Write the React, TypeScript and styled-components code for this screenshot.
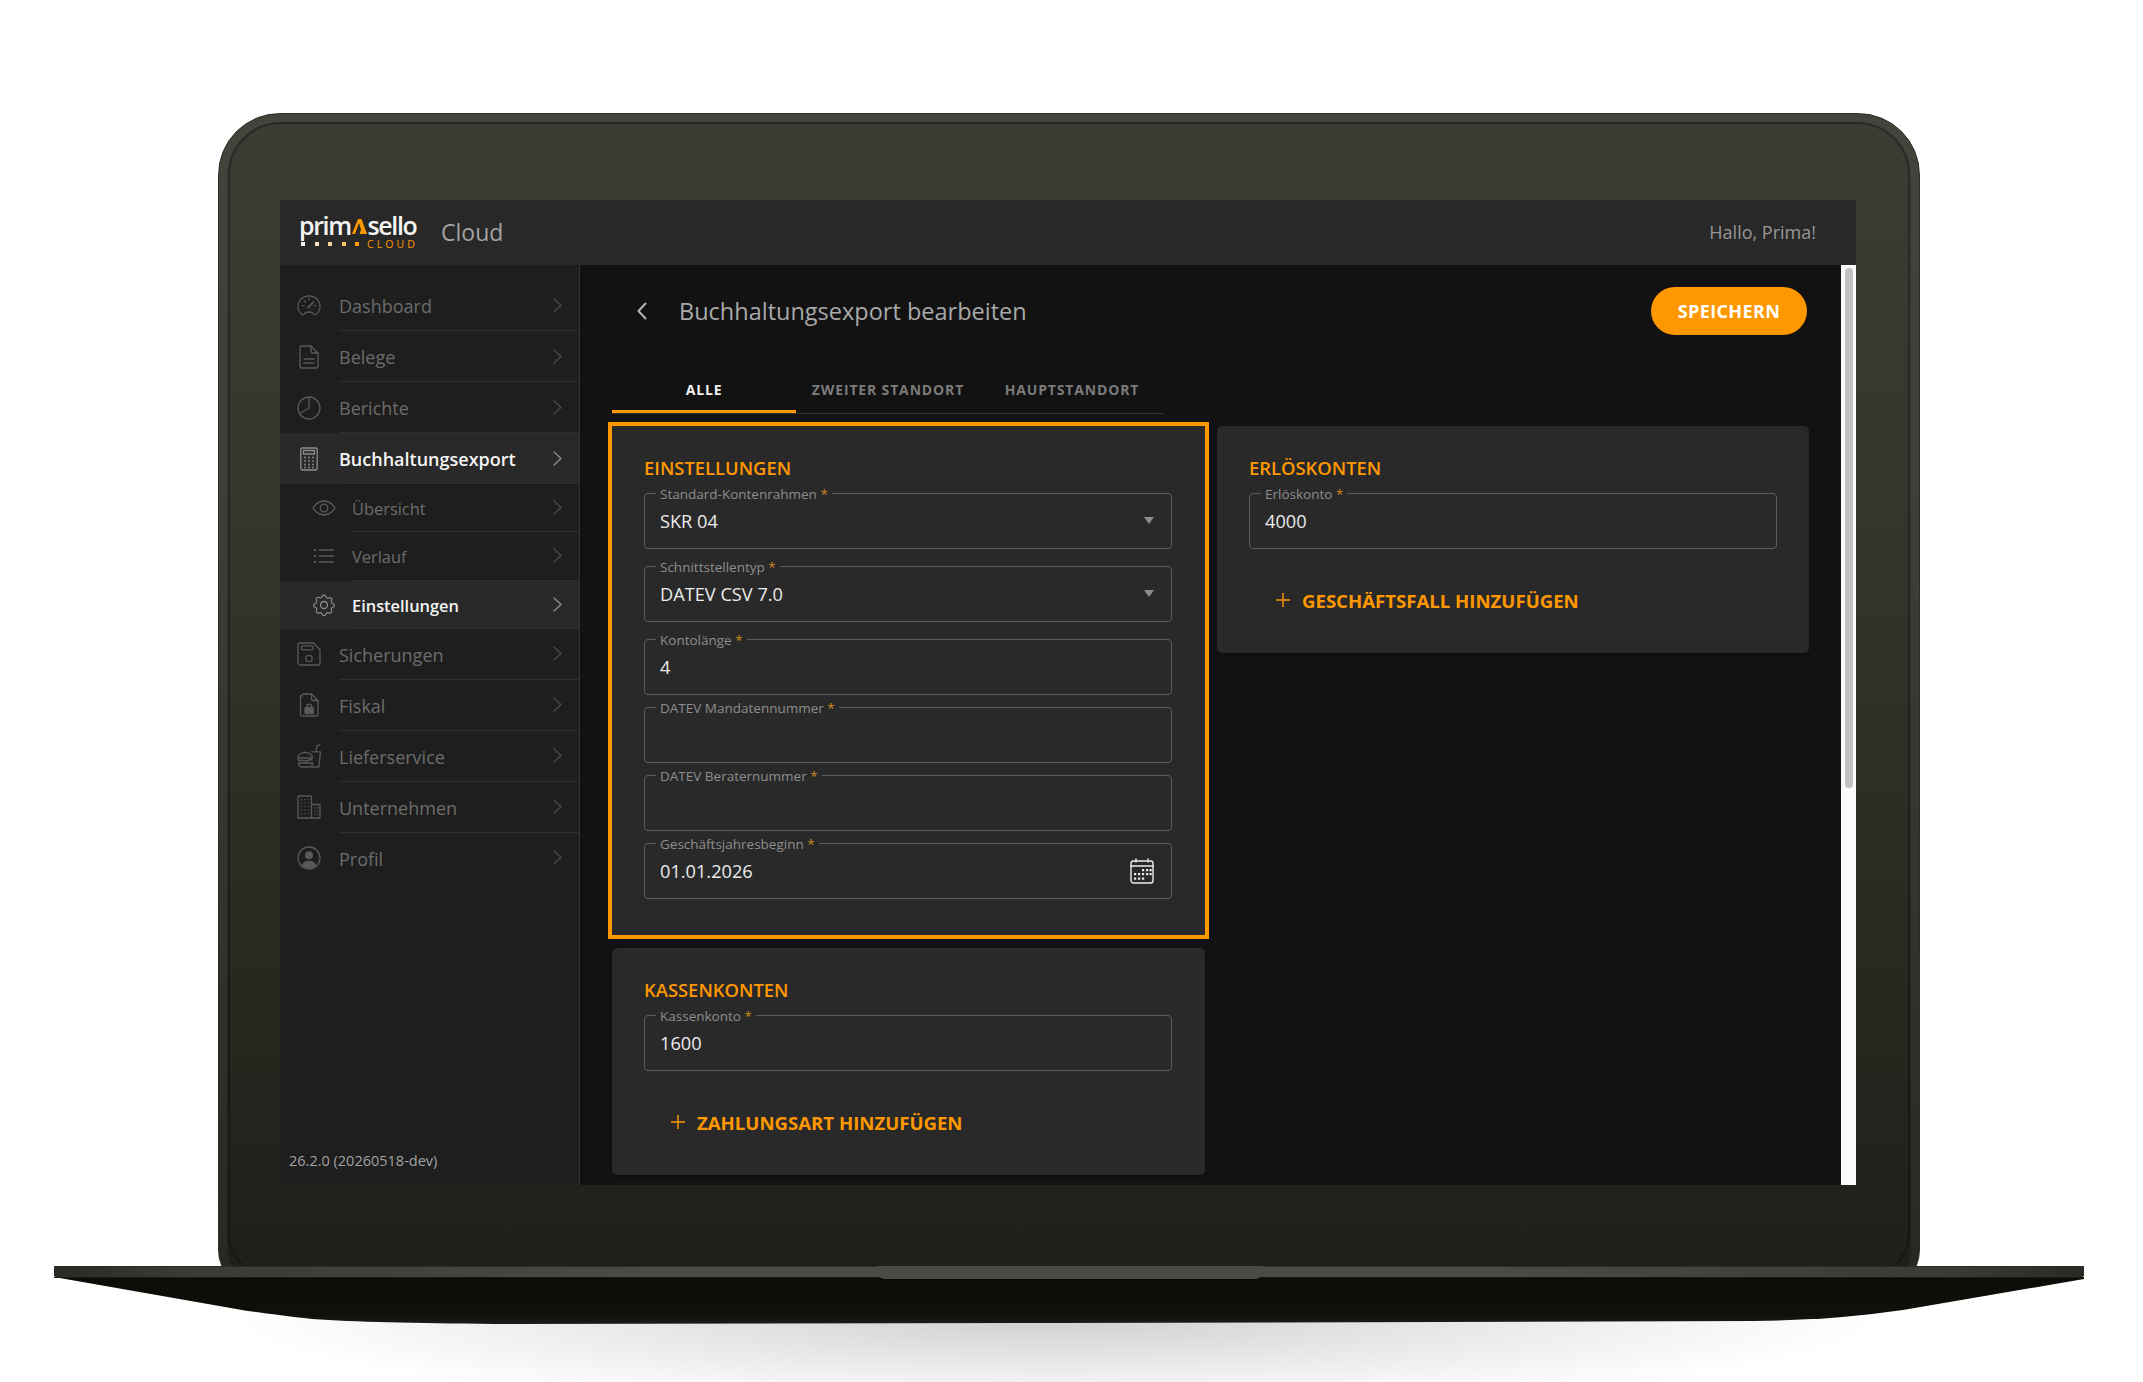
import React from "react";
import styled, { createGlobalStyle } from "styled-components";

const ORANGE = "#ff9800";

const GlobalStyle = createGlobalStyle`
  html, body {
    margin: 0;
    padding: 0;
    background: #fff;
  }
  * {
    box-sizing: border-box;
  }
  body {
    font-family: "Open Sans", "Noto Sans", "Liberation Sans", sans-serif;
  }
`;

const Stage = styled.div`
  position: relative;
  width: 2143px;
  height: 1382px;
  overflow: hidden;
  padding-top: 113px;
  background: #fff;
`;

const Lid = styled.div`
  position: relative;
  width: 1702px;
  height: 1177px;
  margin-left: 218px;
  padding: 86px 63px 0 61px;
  border: 1px solid #2d2c26;
  border-radius: 62px 62px 40px 40px;
  background: linear-gradient(180deg, #3d3c34 0%, #36352d 35%, #26251e 80%, #1f1e18 100%);
  box-shadow: inset 0 0 0 8px rgba(255, 255, 255, 0.045);

  &::before {
    content: "";
    position: absolute;
    top: 8px;
    left: 9px;
    right: 9px;
    bottom: 11px;
    border: 2px solid rgba(0, 0, 0, 0.3);
    border-radius: 53px 53px 44px 44px;
  }
`;

const BaseWrap = styled.div`
  position: relative;
  width: 2030px;
  height: 60px;
  margin: -24px 0 0 54px;

  svg {
    display: block;
  }
`;

const GroundShadow = styled.div`
  position: absolute;
  left: 230px;
  top: 1300px;
  width: 1650px;
  height: 90px;
  background: radial-gradient(
    ellipse 50% 100% at 50% 20%,
    rgba(0, 0, 0, 0.19) 0%,
    rgba(0, 0, 0, 0.09) 50%,
    rgba(0, 0, 0, 0) 100%
  );
`;

const Screen = styled.div`
  position: relative;
  z-index: 1;
  display: flex;
  flex-direction: column;
  width: 1576px;
  height: 985px;
  overflow: hidden;
  background: #121212;
`;

const TopBar = styled.header`
  display: flex;
  align-items: center;
  justify-content: space-between;
  flex: 0 0 65px;
  padding: 0 40px 2px 19px;
  background: #282828;
`;

const Brand = styled.div`
  display: flex;
  align-items: center;
  gap: 26px;
`;

const Logo = styled.div`
  display: flex;
  flex-direction: column;
  width: 116px;
  margin-top: -2px;
`;

const LogoWord = styled.div`
  display: flex;
  align-items: flex-end;
  height: 25px;
  font-size: 25px;
  line-height: 25px;
  font-weight: 600;
  letter-spacing: -1.4px;
  color: #f4f4f4;
`;

const LogoSub = styled.div`
  display: flex;
  align-items: center;
  justify-content: space-between;
  height: 10px;
  margin-top: 1px;
  padding-left: 2px;
`;

const LogoDots = styled.div`
  display: flex;
  gap: 9.5px;
`;

const LogoDot = styled.span<{ $color: string }>`
  width: 4px;
  height: 4px;
  background: ${(p) => p.$color};
`;

const LogoCloud = styled.span`
  font-size: 10.5px;
  line-height: 10px;
  letter-spacing: 3.1px;
  margin-right: -3px;
  color: ${ORANGE};
`;

const CloudLabel = styled.span`
  font-size: 23px;
  color: #a3a3a3;
`;

const Greeting = styled.span`
  font-size: 18px;
  color: #979797;
`;

const Body = styled.div`
  display: flex;
  flex: 1;
  min-height: 0;
`;

const Sidebar = styled.aside`
  display: flex;
  flex-direction: column;
  flex: 0 0 300px;
  padding-top: 15px;
  border-right: 1px solid #333;
  background: #1e1e1e;
`;

const NavRow = styled.div<{ $active?: boolean; $sub?: boolean }>`
  display: flex;
  align-items: stretch;
  height: ${(p) => (p.$sub ? "48.33px" : "51px")};
  background: ${(p) => (p.$active ? "#292929" : "transparent")};
  color: ${(p) => (p.$active ? "#8d8d8d" : "#595959")};
`;

const NavIcon = styled.span<{ $sub?: boolean }>`
  display: flex;
  align-items: center;
  justify-content: center;
  flex: 0 0 ${(p) => (p.$sub ? "72px" : "59px")};
  padding-left: ${(p) => (p.$sub ? "16px" : "0")};
  padding-right: ${(p) => (p.$sub ? "0" : "1px")};
`;

const NavBody = styled.div<{ $last?: boolean }>`
  display: flex;
  align-items: center;
  justify-content: space-between;
  flex: 1;
  padding-right: 17px;
  border-bottom: 1px solid ${(p) => (p.$last ? "transparent" : "#2f2f2f")};
`;

const NavLabel = styled.span<{ $active?: boolean; $sub?: boolean }>`
  padding-top: 2px;
  font-size: ${(p) => (p.$sub ? "16.4px" : "18px")};
  font-weight: ${(p) => (p.$active ? 600 : 400)};
  color: ${(p) => (p.$active ? "#f5f5f5" : "#6c6c6c")};
`;

const NavChevron = styled.span<{ $active?: boolean }>`
  display: flex;
  color: ${(p) => (p.$active ? "#8d8d8d" : "#4b4b4b")};
`;

const Version = styled.div`
  margin-top: auto;
  padding: 0 0 14px 9px;
  font-size: 14.5px;
  line-height: 20px;
  color: #a2a2a2;
`;

const Main = styled.main`
  flex: 1;
  min-width: 0;
  padding: 22px 34px 0 32px;
  overflow: hidden;
`;

const PageHead = styled.div`
  display: flex;
  align-items: center;
  justify-content: space-between;
  height: 48px;
`;

const PageTitleWrap = styled.div`
  display: flex;
  align-items: center;
  gap: 32px;
  padding-left: 25px;
`;

const PageTitle = styled.h1`
  margin: 0;
  font-size: 23.5px;
  font-weight: 400;
  color: #a9a9a9;
`;

const SaveButton = styled.button`
  width: 156px;
  height: 48px;
  padding: 0;
  border: none;
  border-radius: 24px;
  background: ${ORANGE};
  color: #fff;
  font-family: inherit;
  font-size: 18px;
  font-weight: 700;
  letter-spacing: 0.4px;
`;

const TabBar = styled.div`
  display: flex;
  width: 552px;
  height: 48px;
  margin-top: 31px;
  border-bottom: 1px solid #333;
`;

const Tab = styled.div<{ $active?: boolean }>`
  display: flex;
  align-items: center;
  justify-content: center;
  width: 184px;
  height: 47px;
  border-bottom: 3px solid ${(p) => (p.$active ? ORANGE : "transparent")};
  padding-top: 2px;
  font-size: 14px;
  font-weight: 700;
  letter-spacing: 0.85px;
  color: ${(p) => (p.$active ? "#f0f0f0" : "#7b7b7b")};
`;

const Columns = styled.div`
  display: grid;
  grid-template-columns: 593px 592px;
  gap: 12px;
  align-items: start;
  margin-top: 12px;
`;

const Column = styled.div`
  display: flex;
  flex-direction: column;
  gap: 13px;
`;

const Card = styled.section<{ $highlight?: boolean }>`
  padding: 30px 32px ${(p) => (p.$highlight ? "36px" : "29px")};
  border-radius: ${(p) => (p.$highlight ? "0" : "5px")};
  background: #292929;
  outline: ${(p) => (p.$highlight ? `4px solid ${ORANGE}` : "none")};
  box-shadow: 0 2px 3px rgba(0, 0, 0, 0.25);
`;

const CardTitle = styled.h2`
  margin: 0 0 13px;
  font-size: 18.4px;
  line-height: 24px;
  font-weight: 600;
  color: ${ORANGE};
`;

const FieldBox = styled.div<{ $gap?: number }>`
  position: relative;
  display: flex;
  align-items: center;
  justify-content: space-between;
  width: 528px;
  height: 56px;
  margin-bottom: ${(p) => p.$gap ?? 0}px;
  padding: 0 17px 0 15px;
  border: 1px solid #5c5c5c;
  border-radius: 4px;
`;

const FieldLabel = styled.label`
  position: absolute;
  top: -9px;
  left: 11px;
  padding: 0 4px;
  background: #292929;
  font-size: 13.5px;
  line-height: 18px;
  color: #8e8e8e;
`;

const Required = styled.span`
  color: #d08a1d;
`;

const FieldValue = styled.span`
  font-size: 18.2px;
  color: #ececec;
`;

const SelectArrow = styled.span`
  width: 0;
  height: 0;
  margin-bottom: 2px;
  border-left: 5.5px solid transparent;
  border-right: 5.5px solid transparent;
  border-top: 7px solid #8c8c8c;
`;

const AddRow = styled.div`
  display: flex;
  align-items: center;
  gap: 11px;
  height: 48px;
  margin-top: 27px;
  padding-left: 26px;
  font-size: 18.6px;
  font-weight: 700;
  color: ${ORANGE};
`;

const ScrollTrack = styled.div`
  flex: 0 0 15px;
  padding: 3px 3px 0 4px;
  background: #fafafa;
`;

const ScrollThumb = styled.div`
  height: 520px;
  border-radius: 4px;
  background: #c1c1c1;
`;

const Svg: React.FC<{ children: React.ReactNode }> = ({ children }) => (
  <svg
    width={24}
    height={24}
    viewBox="0 0 24 24"
    fill="none"
    stroke="currentColor"
    strokeWidth={1.3}
    strokeLinecap="round"
    strokeLinejoin="round"
  >
    {children}
  </svg>
);

const DotGrid: React.FC<{ xs: number[]; ys: number[]; r?: number }> = ({ xs, ys, r = 0.7 }) => (
  <>
    {ys.map((y) =>
      xs.map((x) => <circle key={`${x}-${y}`} cx={x} cy={y} r={r} fill="currentColor" stroke="none" />)
    )}
  </>
);

const GaugeIcon = () => (
  <Svg>
    <path d="M5 20.5C2.6 18.6 1 15.6 1 12.5 1 6.5 6 1.8 12 1.8s11 4.7 11 10.7c0 3.1-1.6 6.1-4 8-.7.5-1.4.3-1.9-.3-1.2-1.4-3-2.2-5.1-2.2s-3.9.8-5.1 2.2c-.5.6-1.2.8-1.9.3Z" />
    <path d="M12 4.2v1.6M5.6 11.6h1.6M17 11.6h1.6M7.4 7l1.1 1.1" />
    <path d="M11 13.6 16.4 8.2" strokeWidth={1.8} />
  </Svg>
);

const FileIcon = () => (
  <Svg>
    <path d="M3 3a2 2 0 0 1 2-2h9l7 7.200V21a2 2 0 0 1-2 2H5a2 2 0 0 1-2-2Z" />
    <path d="M14 1v5a2 2 0 0 0 2 2h5M7 14h10M7 18h10" />
  </Svg>
);

const PieIcon = () => (
  <Svg>
    <circle cx="12" cy="12" r="11" />
    <path d="M12 1.500V12L2.800 17.500" />
  </Svg>
);

const CalculatorIcon = () => (
  <Svg>
    <rect x="3.800" y="1" width="16.400" height="22" rx="1.500" />
    <rect x="6.500" y="3.500" width="11" height="3.500" />
    <DotGrid xs={[8, 12, 16]} ys={[10.500, 14, 17.500, 20.500]} r={0.9} />
  </Svg>
);

const EyeIcon = () => (
  <Svg>
    <path d="M1 12s4-7 11-7 11 7 11 7-4 7-11 7-11-7-11-7Z" />
    <circle cx="12" cy="12" r="3.800" />
  </Svg>
);

const ListIcon = () => (
  <Svg>
    <path d="M7.500 6h14M7.500 12h14M7.500 18h14" />
    <DotGrid xs={[3]} ys={[6, 12, 18]} r={1.200} />
  </Svg>
);

const GearIcon = () => (
  <Svg>
    <path d="M10.200 2.200a2 2 0 0 1 3.600 0l.6 1.200a2 2 0 0 0 2.300 1l1.300-.4a2 2 0 0 1 2.500 2.500l-.4 1.300a2 2 0 0 0 1 2.300l1.200.6a2 2 0 0 1 0 3.600l-1.200.6a2 2 0 0 0-1 2.300l.4 1.300a2 2 0 0 1-2.500 2.500l-1.300-.4a2 2 0 0 0-2.300 1l-.6 1.200a2 2 0 0 1-3.600 0l-.6-1.200a2 2 0 0 0-2.300-1l-1.300.4a2 2 0 0 1-2.500-2.500l.4-1.300a2 2 0 0 0-1-2.300l-1.200-.6a2 2 0 0 1 0-3.600l1.200-.6a2 2 0 0 0 1-2.300L3.500 6a2 2 0 0 1 2.500-2.500l1.300.4a2 2 0 0 0 2.300-1Z" transform="translate(1.200 1.200) scale(.9)" />
    <circle cx="12" cy="12" r="3.500" />
  </Svg>
);

const FloppyIcon = () => (
  <Svg>
    <path d="M3 1h13.500L23 7.500V21a2 2 0 0 1-2 2H3a2 2 0 0 1-2-2V3a2 2 0 0 1 2-2Z" />
    <rect x="4.500" y="3.800" width="11.500" height="4" rx="1" />
    <circle cx="12" cy="16.500" r="3.200" />
  </Svg>
);

const FileLockIcon = () => (
  <Svg>
    <path d="M5 3a2 2 0 0 1 2-2h7.500L21 7.500V21a2 2 0 0 1-2 2H5a1.500 1.500 0 0 1-1.500-1.500V3Z" />
    <path d="M14.500 1v4.500a2 2 0 0 0 2 2H21" />
    <rect x="8" y="14.500" width="8.500" height="6" rx="1" fill="currentColor" />
    <path d="M9.800 14.500v-1a2.400 2.400 0 0 1 4.800 0v1" />
  </Svg>
);

const BurgerIcon = () => (
  <Svg>
    <path d="M14.500 7.800H23.500L21.800 23H15M19 7.800 19.800 1.800 22.500.8" />
    <path d="M1 14c0-3.300 3-5.500 7-5.500s7.500 2.200 7.500 5.500ZM.8 15.800c1.500 1.600 3 .2 4.500.4s3 1.400 5 .4 3-1 4.800-.8M1.500 19h14c0 2.600-1.200 4-3 4H4.500c-1.800 0-3-1.400-3-4Z" />
  </Svg>
);

const BuildingIcon = () => (
  <Svg>
    <path d="M1 2a1 1 0 0 1 1-1h11.500a1 1 0 0 1 1 1v21H1Z" />
    <path d="M14.500 9.500H22a1 1 0 0 1 1 1V23h-8.500" />
    <DotGrid xs={[4.500, 8, 11.500]} ys={[4.500, 8, 11.500, 15, 18.500]} />
    <DotGrid xs={[18, 20.800]} ys={[13, 16, 19]} />
  </Svg>
);

const ProfileIcon = () => (
  <Svg>
    <circle cx="12" cy="12" r="11" />
    <circle cx="12" cy="9.200" r="4" fill="currentColor" stroke="none" />
    <path d="M4.800 19.500C6 16 9 14.800 12 14.800s6 1.200 7.200 4.700A11 11 0 0 1 12 22.500a11 11 0 0 1-7.200-3Z" fill="currentColor" stroke="none" />
  </Svg>
);

const Chevron = () => (
  <svg width="9" height="15" viewBox="0 0 9 15" fill="none" stroke="currentColor" strokeWidth="1.3" strokeLinecap="round" strokeLinejoin="round">
    <path d="M1 1l7 6.500L1 14" />
  </svg>
);

const BackIcon = () => (
  <svg width="10" height="18" viewBox="0 0 10 18" fill="none" stroke="#b4b4b4" strokeWidth="2" strokeLinecap="round" strokeLinejoin="round">
    <path d="M8.500 1.500 1.500 9l7 7.500" />
  </svg>
);

const PlusIcon = () => (
  <svg width="16" height="16" viewBox="0 0 16 16" fill="none" stroke={ORANGE} strokeWidth="1.4">
    <path d="M8 1v14M1 8h14" />
  </svg>
);

const CalendarIcon = () => (
  <svg width="24" height="26" viewBox="0 0 24 26" fill="none" stroke="#ececec" strokeWidth="1.4" strokeLinecap="round" strokeLinejoin="round">
    <rect x="1" y="3" width="22" height="22" rx="2.500" />
    <path d="M1 8h22M6 1v3M18 1v3" />
    <g fill="#ececec" stroke="none">
      {[
        [13, 12], [17, 12], [20.500, 12],
        [5, 16], [9, 16], [13, 16], [17, 16], [20.500, 16],
        [5, 20.500], [9, 20.500], [13, 20.500],
      ].map(([x, y]) => (
        <rect key={`${x}-${y}`} x={x - 1} y={y - 1} width="2.200" height="2.200" />
      ))}
    </g>
  </svg>
);

const TrianglePart = () => (
  <svg width="15" height="15" viewBox="0 0 15 15" style={{ margin: "0 1px 4px 1px", flex: "none" }}>
    <path d="M6 0H9.500L15 15H7.500L9 10.500 7 4 3 15H0Z" fill={ORANGE} />
  </svg>
);

interface NavItem {
  label: string;
  icon: React.ReactNode;
  active?: boolean;
  sub?: boolean;
  last?: boolean;
}

const navItems: NavItem[] = [
  { label: "Dashboard", icon: <GaugeIcon /> },
  { label: "Belege", icon: <FileIcon /> },
  { label: "Berichte", icon: <PieIcon /> },
  { label: "Buchhaltungsexport", icon: <CalculatorIcon />, active: true },
  { label: "Übersicht", icon: <EyeIcon />, sub: true },
  { label: "Verlauf", icon: <ListIcon />, sub: true },
  { label: "Einstellungen", icon: <GearIcon />, sub: true, active: true },
  { label: "Sicherungen", icon: <FloppyIcon /> },
  { label: "Fiskal", icon: <FileLockIcon /> },
  { label: "Lieferservice", icon: <BurgerIcon /> },
  { label: "Unternehmen", icon: <BuildingIcon /> },
  { label: "Profil", icon: <ProfileIcon />, last: true },
];

const logoDots = ["#f4f4f4", "#f6e3c6", "#f8d29c", "#fbc16b", "#ff9800"];

const Field: React.FC<{ label: string; value?: string; gap?: number; trailing?: React.ReactNode }> = ({
  label,
  value,
  gap,
  trailing,
}) => (
  <FieldBox $gap={gap}>
    <FieldLabel>
      {label} <Required>*</Required>
    </FieldLabel>
    <FieldValue>{value}</FieldValue>
    {trailing}
  </FieldBox>
);

const Base = () => (
  <BaseWrap>
    <svg width="2030" height="60" viewBox="0 0 2030 60">
      <defs>
        <linearGradient id="band" x1="0" x2="1" y1="0" y2="0">
          <stop offset="0" stopColor="#2a2a24" />
          <stop offset="0.06" stopColor="#3a3a33" />
          <stop offset="0.3" stopColor="#4c4c44" />
          <stop offset="0.7" stopColor="#4c4c44" />
          <stop offset="0.94" stopColor="#3a3a33" />
          <stop offset="1" stopColor="#2a2a24" />
        </linearGradient>
        <linearGradient id="wedge" x1="0" x2="0" y1="0" y2="1">
          <stop offset="0" stopColor="#0d0d07" />
          <stop offset="0.8" stopColor="#10100b" />
          <stop offset="1" stopColor="#1b1b18" />
        </linearGradient>
      </defs>
      <path
        d="M0 11H2030V13L1849 44C1800 51 1760 54 1700 55L1000 57 440 58C360 57 300 56 258 53 230 50 200 46 188 44Z"
        fill="url(#wedge)"
      />
      <rect x="0" y="0" width="2030" height="11" rx="2" fill="url(#band)" />
      <rect x="0" y="0" width="2030" height="1" fill="#2c2c26" />
      <path d="M823 0H1209V6C1209 10 1206 13 1200 13H832C826 13 823 10 823 6Z" fill="#4b4b44" />
      <rect x="0" y="11" width="823" height="1" fill="#1a1a15" />
      <rect x="1209" y="11" width="821" height="1" fill="#1a1a15" />
    </svg>
  </BaseWrap>
);

export default function App() {
  return (
    <Stage>
      <GlobalStyle />
      <GroundShadow />
      <Lid>
        <Screen>
          <TopBar>
            <Brand>
              <Logo>
                <LogoWord>
                  prim
                  <TrianglePart />
                  sello
                </LogoWord>
                <LogoSub>
                  <LogoDots>
                    {logoDots.map((c) => (
                      <LogoDot key={c} $color={c} />
                    ))}
                  </LogoDots>
                  <LogoCloud>CLOUD</LogoCloud>
                </LogoSub>
              </Logo>
              <CloudLabel>Cloud</CloudLabel>
            </Brand>
            <Greeting>Hallo, Prima!</Greeting>
          </TopBar>
          <Body>
            <Sidebar>
              {navItems.map((item) => (
                <NavRow key={item.label} $active={item.active} $sub={item.sub}>
                  <NavIcon $sub={item.sub}>{item.icon}</NavIcon>
                  <NavBody $last={item.last}>
                    <NavLabel $active={item.active} $sub={item.sub}>
                      {item.label}
                    </NavLabel>
                    <NavChevron $active={item.active}>
                      <Chevron />
                    </NavChevron>
                  </NavBody>
                </NavRow>
              ))}
              <Version>26.2.0 (20260518-dev)</Version>
            </Sidebar>
            <Main>
              <PageHead>
                <PageTitleWrap>
                  <BackIcon />
                  <PageTitle>Buchhaltungsexport bearbeiten</PageTitle>
                </PageTitleWrap>
                <SaveButton>SPEICHERN</SaveButton>
              </PageHead>
              <TabBar>
                <Tab $active>ALLE</Tab>
                <Tab>ZWEITER STANDORT</Tab>
                <Tab>HAUPTSTANDORT</Tab>
              </TabBar>
              <Columns>
                <Column>
                  <Card $highlight>
                    <CardTitle>EINSTELLUNGEN</CardTitle>
                    <Field label="Standard-Kontenrahmen" value="SKR 04" gap={17} trailing={<SelectArrow />} />
                    <Field label="Schnittstellentyp" value="DATEV CSV 7.0" gap={17} trailing={<SelectArrow />} />
                    <Field label="Kontolänge" value="4" gap={12} />
                    <Field label="DATEV Mandatennummer" gap={12} />
                    <Field label="DATEV Beraternummer" gap={12} />
                    <Field label="Geschäftsjahresbeginn" value="01.01.2026" trailing={<CalendarIcon />} />
                  </Card>
                  <Card>
                    <CardTitle>KASSENKONTEN</CardTitle>
                    <Field label="Kassenkonto" value="1600" />
                    <AddRow>
                      <PlusIcon />
                      ZAHLUNGSART HINZUFÜGEN
                    </AddRow>
                  </Card>
                </Column>
                <Column>
                  <Card>
                    <CardTitle>ERLÖSKONTEN</CardTitle>
                    <Field label="Erlöskonto" value="4000" />
                    <AddRow>
                      <PlusIcon />
                      GESCHÄFTSFALL HINZUFÜGEN
                    </AddRow>
                  </Card>
                </Column>
              </Columns>
            </Main>
            <ScrollTrack>
              <ScrollThumb />
            </ScrollTrack>
          </Body>
        </Screen>
      </Lid>
      <Base />
    </Stage>
  );
}
